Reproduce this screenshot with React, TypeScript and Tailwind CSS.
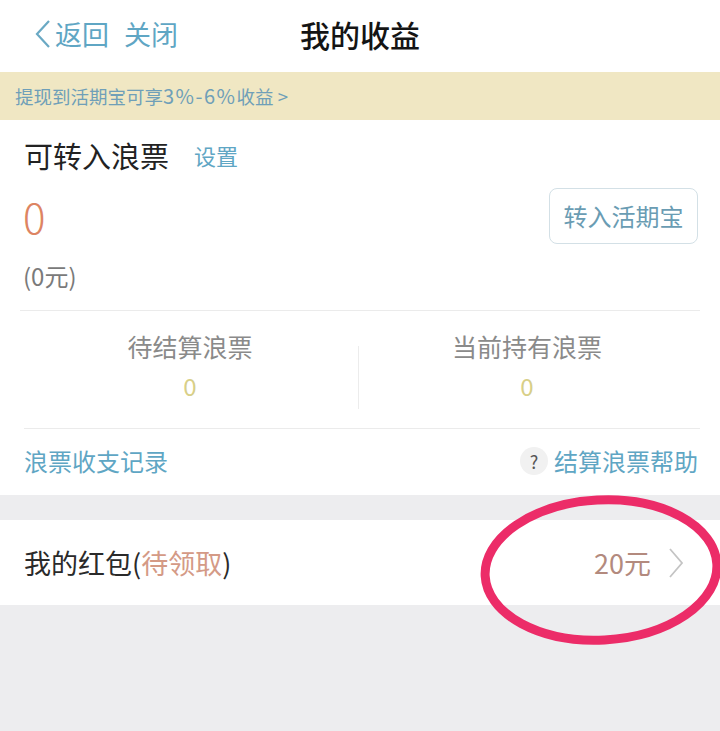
import React from "react";

export default function App() {
  return (
    <div
      className="relative w-[720px] h-[731px] overflow-hidden bg-[#ededef]"
      style={{ fontFamily: '"Noto Sans CJK SC", "Noto Sans", sans-serif' }}
    >
      {/* Header */}
      <div className="h-[72px] bg-white grid grid-cols-[1fr_auto_1fr] items-center pb-[5px]">
        <div className="flex items-center pl-[33px] text-[#5fa6c4] text-[27px] leading-none">
          <svg width="20" height="32" viewBox="0 0 20 32" className="mr-[2px]">
            <path d="M16 3 L4 16 L16 29" fill="none" stroke="#6aa9c4" strokeWidth="2.2" />
          </svg>
          <span>返回</span>
          <span className="ml-[15px]">关闭</span>
        </div>
        <div className="text-[30px] font-medium text-[#141414] leading-none">我的收益</div>
        <div />
      </div>

      {/* Banner */}
      <div className="h-[48px] bg-[#f0e7c3] flex items-center pl-[15px] text-[18.5px] text-[#6f9fb8] leading-none">
        <span>提现到活期宝可享</span>
        <span className="text-[20px] tracking-[1.5px]">3%-6%</span>
        <span>收益 &gt;</span>
      </div>

      {/* Card */}
      <div className="bg-white h-[375px] flex flex-col">
        <div className="h-[70px] flex items-center pl-[24px]">
          <span className="text-[29px] text-[#222] leading-none">可转入浪票</span>
          <span className="ml-[25px] text-[22px] text-[#5fa6c4] leading-none">设置</span>
        </div>
        <div className="h-[52px] flex items-center justify-between pl-[23px] pr-[22px]">
          <span className="text-[42px] font-light text-[#dd8462] leading-none">0</span>
          <div className="w-[149px] h-[56px] rounded-[8px] border border-[#d3e0e6] flex items-center justify-center text-[24px] text-[#6a9cb3] leading-none">
            转入活期宝
          </div>
        </div>
        <div className="h-[68px] flex items-center pl-[23px] text-[24px] text-[#7a7a7a] leading-none">
          (0元)
        </div>
        <div className="ml-[20px] mr-[20px] h-px bg-[#ebebeb]" />
        <div className="h-[117px] ml-[22px] mr-[25px] pb-[8px] grid grid-cols-[1fr_1px_1fr] items-center">
          <div className="flex flex-col items-center">
            <span className="text-[25px] text-[#8a8a8a] leading-none">待结算浪票</span>
            <span className="mt-[15px] text-[24px] text-[#d8cf88] leading-none">0</span>
          </div>
          <div className="h-[63px] mt-[24px] bg-[#ececec]" />
          <div className="flex flex-col items-center">
            <span className="text-[25px] text-[#8a8a8a] leading-none">当前持有浪票</span>
            <span className="mt-[15px] text-[24px] text-[#d8cf88] leading-none">0</span>
          </div>
        </div>
        <div className="ml-[24px] mr-[20px] h-px bg-[#ebebeb]" />
        <div className="flex-1 flex items-center justify-between pl-[24px] pr-[22px] pb-[3px]">
          <span className="text-[24px] text-[#5fa6c4] leading-none">浪票收支记录</span>
          <div className="flex items-center">
            <span className="w-[28px] h-[28px] rounded-full bg-[#f1f1f1] flex items-center justify-center text-[18px] text-[#555] leading-none">
              ?
            </span>
            <span className="ml-[6px] text-[24px] text-[#5fa6c4] leading-none">结算浪票帮助</span>
          </div>
        </div>
      </div>

      <div className="h-[25px]" />

      {/* Red packet row */}
      <div className="h-[85px] bg-white flex items-center justify-between pl-[24px] pr-[36px]">
        <span className="text-[27px] text-[#2a2a2a] leading-none">
          我的红包(<span className="text-[#d49a86]">待领取</span>)
        </span>
        <div className="flex items-center">
          <span className="text-[27px] text-[#b38a7e] leading-none">20元</span>
          <svg width="16" height="32" viewBox="0 0 16 32" className="ml-[17px]">
            <path d="M2 2 L14 16 L2 30" fill="none" stroke="#c4c4c4" strokeWidth="1.8" />
          </svg>
        </div>
      </div>

      {/* Red annotation ellipse */}
      <svg
        className="absolute left-[478px] top-[492px]"
        width="250"
        height="156"
        viewBox="0 0 250 156"
      >
        <ellipse
          cx="123"
          cy="78"
          rx="116"
          ry="70"
          fill="none"
          stroke="#ec2c68"
          strokeWidth="9"
          transform="rotate(-3 123 78)"
        />
      </svg>
    </div>
  );
}
